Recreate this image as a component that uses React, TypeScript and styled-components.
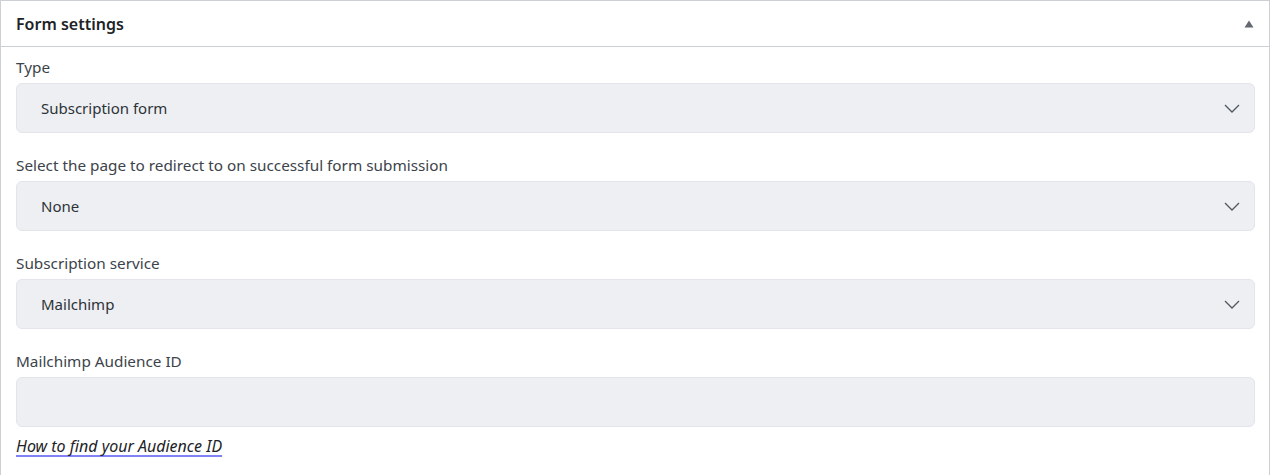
import styled, { createGlobalStyle } from 'styled-components';

const GlobalStyle = createGlobalStyle`
    body {
        margin: 0;
        background: #fff;
        font-family: 'Noto Sans', 'Open Sans', sans-serif;
    }
`;

const fields = [
    { label: 'Type', value: 'Subscription form', select: true },
    { label: 'Select the page to redirect to on successful form submission', value: 'None', select: true },
    { label: 'Subscription service', value: 'Mailchimp', select: true },
    { label: 'Mailchimp Audience ID', value: '', select: false },
];

function Chevron() {
    return (
        <svg width="16" height="9" viewBox="0 0 16 9" fill="none">
            <path d="M1 1l7 7 7-7" stroke="#50575e" strokeWidth="1.3" />
        </svg>
    );
}

export default function App() {
    return (
        <>
            <GlobalStyle />
            <Panel>
                <Header>
                    <Title>Form settings</Title>
                    <Toggle aria-label="Collapse">
                        <svg width="10" height="8" viewBox="0 0 10 8">
                            <path d="M5 0.5L9.5 7.5H0.5z" fill="#646970" />
                        </svg>
                    </Toggle>
                </Header>
                <Body>
                    {fields.map((field) => (
                        <Field key={field.label}>
                            <Label>{field.label}</Label>
                            <Control>
                                <span>{field.value}</span>
                                {field.select && <Chevron />}
                            </Control>
                        </Field>
                    ))}
                    <HelpLink href="#">How to find your Audience ID</HelpLink>
                </Body>
            </Panel>
        </>
    );
}

const Panel = styled.section`
    width: 1270px;
    box-sizing: border-box;
    border: 1px solid #ccd0d4;
    min-height: 520px;
    background: #fff;
`;

const Header = styled.header`
    height: 45px;
    display: flex;
    align-items: center;
    justify-content: space-between;
    padding: 0 15px;
    border-bottom: 1px solid #ccd0d4;
`;

const Title = styled.h2`
    margin: 0;
    font-size: 16px;
    font-weight: 600;
    color: #1d2327;
`;

const Toggle = styled.button`
    background: none;
    border: none;
    padding: 0;
    display: flex;
    cursor: pointer;

    svg {
        display: block;
    }
`;

const Body = styled.div`
    padding: 10px 14px 0 15px;
    display: flex;
    flex-direction: column;
    gap: 22px;
`;

const Field = styled.div`
    display: flex;
    flex-direction: column;
    gap: 6px;
`;

const Label = styled.label`
    font-size: 15.3px;
    line-height: 20px;
    color: #3c434a;
`;

const Control = styled.div`
    height: 50px;
    box-sizing: border-box;
    display: flex;
    align-items: center;
    justify-content: space-between;
    padding: 0 14px 0 24px;
    background: #eeeff3;
    border: 1px solid #e3e5ea;
    border-radius: 6px;
    font-size: 15px;
    color: #2c3338;
`;

const HelpLink = styled.a`
    align-self: flex-start;
    margin-top: -13px;
    font-size: 16px;
    line-height: 20px;
    font-style: italic;
    color: #1d2327;
    text-decoration: underline;
    text-decoration-color: #8083f7;
    text-decoration-thickness: 2px;
    text-decoration-skip-ink: none;
    text-underline-offset: 3px;
`;
